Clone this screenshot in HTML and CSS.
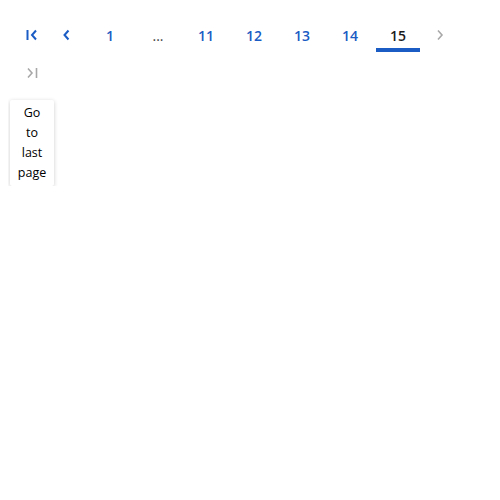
FILE: index.html
```html
<!DOCTYPE html>
<html>
<head>
<meta charset="utf-8">
<link rel="stylesheet" href="styles.css">
</head>
<body>
<nav class="pager">
  <button class="icon-btn" aria-label="Go to first page">
    <svg width="12" height="12" viewBox="0 0 12 12"><path d="M1.5 1v10" stroke="currentColor" stroke-width="2" fill="none"/><path d="M10 1.5 6 6l4 4.5" stroke="currentColor" stroke-width="2" fill="none"/></svg>
  </button>
  <button class="icon-btn" aria-label="Previous page">
    <svg width="12" height="12" viewBox="0 0 12 12"><path d="M6.5 1.5 2.5 6l4 4.5" stroke="currentColor" stroke-width="2" fill="none"/></svg>
  </button>
  <button class="page">1</button>
  <div class="dots">...</div>
  <button class="page">11</button>
  <button class="page">12</button>
  <button class="page">13</button>
  <button class="page">14</button>
  <button class="page current">15</button>
  <button class="icon-btn disabled" aria-label="Next page">
    <svg width="12" height="12" viewBox="0 0 12 12"><path d="M4 1.5 8 6l-4 4.5" stroke="currentColor" stroke-width="1.6" fill="none"/></svg>
  </button>
  <button class="icon-btn disabled" aria-label="Go to last page">
    <svg width="12" height="12" viewBox="0 0 12 12"><path d="M2 1.5 6 6l-4 4.5" stroke="currentColor" stroke-width="1.6" fill="none"/><path d="M10.5 1v10" stroke="currentColor" stroke-width="1.6" fill="none"/></svg>
  </button>
</nav>
<div class="hint-box"><p class="hint-line">Go</p><p class="hint-line">to</p><p class="hint-line">last</p><p class="hint-line">page</p></div>
</body>
</html>
```
FILE: styles.css
```css
body {
  margin: 8px;
  font-family: "Open Sans", "Noto Sans", sans-serif;
  background: #fff;
}
.pager {
  display: flex;
  flex-wrap: wrap;
  padding: 8px 6px 0 6px;
}
.pager button {
  font-family: inherit;
  border: none;
  background: none;
  padding: 0;
  margin: 0;
  cursor: pointer;
}
.icon-btn {
  width: 36px;
  height: 38px;
  display: flex;
  align-items: center;
  justify-content: center;
  color: #1a5cc4;
}
.pager .icon-btn.disabled {
  color: #a8a8a8;
}
.page {
  position: relative;
  width: 48px;
  height: 38px;
  display: flex;
  align-items: center;
  justify-content: center;
  font-size: 14px;
  font-weight: 600;
  color: #1a5cc4;
}
.dots {
  width: 48px;
  height: 38px;
  display: flex;
  align-items: center;
  justify-content: center;
  font-size: 14px;
  color: #444444;
}
.pager .page.current {
  color: #1b1b1b;
}
.page.current::after {
  content: "";
  position: absolute;
  left: 2px;
  right: 2px;
  bottom: 2px;
  height: 4px;
  background: #1a5cc4;
}
.hint-box {
  margin: 8px 0 0 2px;
  width: 44px;
  box-sizing: border-box;
  padding: 3px 0;
  background: #ffffff;
  color: #000000;
  font-size: 12.5px;
  line-height: 20px;
  text-align: center;
  border-radius: 2px;
  box-shadow: 0 1px 4px rgba(0, 0, 0, 0.2);
}
.hint-line {
  margin: 0;
}
```
